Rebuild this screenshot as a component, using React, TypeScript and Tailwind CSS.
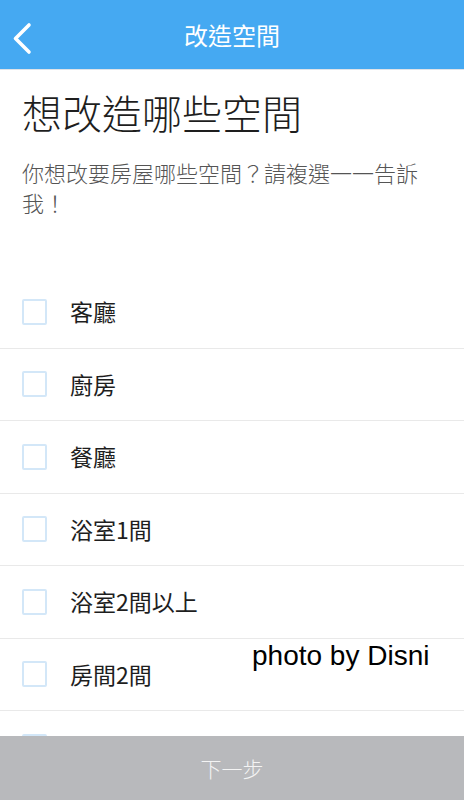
import React from "react";

const items = ["客廳", "廚房", "餐廳", "浴室1間", "浴室2間以上", "房間2間"];

const cjk = { fontFamily: '"Noto Sans CJK TC", "Noto Sans", sans-serif' };

export default function App() {
  return (
    <div className="relative flex h-[800px] w-[464px] flex-col overflow-hidden bg-white" style={cjk}>
      <header className="relative flex h-[70px] shrink-0 items-center justify-center border-b border-[#dfe3e8] bg-[#45a9f2]">
        <svg className="absolute left-0 top-0" width="50" height="70" viewBox="0 0 50 70">
          <path d="M29 25 L15.5 38.5 L29 52" fill="none" stroke="white" strokeWidth="3.6" strokeLinecap="round" strokeLinejoin="round" />
        </svg>
        <span className="text-[24px] leading-none text-white">改造空間</span>
      </header>

      <div className="flex min-h-0 flex-1 flex-col overflow-hidden">
        <div className="px-[22px] pt-[18px]">
          <h1 className="text-[40px] font-light leading-[48px] text-[#1e1e1e]">想改造哪些空間</h1>
          <p className="mt-[21px] pr-[20px] text-[22px] font-light leading-[30px] text-[#555]">
            你想改要房屋哪些空間？請複選一一告訴我！
          </p>
        </div>
        <ul className="mt-[59px]">
          {items.map((it) => (
            <li key={it} className="flex h-[72.5px] shrink-0 items-center border-b border-[#e9e9e9] pl-[22px]">
              <span className="h-[26px] w-[25px] shrink-0 rounded-[2px] border-2 border-[#d3e7f8]" />
              <span className="ml-[23px] text-[23px] leading-none text-[#1e1e1e]">{it}</span>
            </li>
          ))}
          <li className="flex h-[72.5px] shrink-0 items-center pl-[22px]">
            <span className="h-[26px] w-[25px] shrink-0 rounded-[2px] border-2 border-[#d3e7f8]" />
          </li>
        </ul>
      </div>

      <footer className="flex h-[64px] shrink-0 items-center justify-center bg-[#b8b9bc]">
        <span className="text-[21px] font-light leading-none text-[#f4f4f4]">下一步</span>
      </footer>

      <div
        className="pointer-events-none absolute left-[252px] top-[640px] text-[28px] leading-[32px] text-black"
        style={{ fontFamily: '"Liberation Sans", Arial, sans-serif', textShadow: "1px 1px 0 #fff, -1px 0 0 #fff" }}
      >
        photo by Disni
      </div>
    </div>
  );
}
